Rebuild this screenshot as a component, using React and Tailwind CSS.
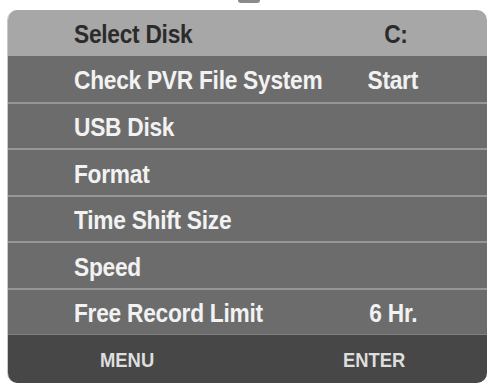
import React from 'react';

const rows = [
    { label: 'Check PVR File System', value: 'Start', h: 'h-[46px]' },
    { label: 'USB Disk', value: '', h: 'h-[46px]' },
    { label: 'Format', value: '', h: 'h-[47px]' },
    { label: 'Time Shift Size', value: '', h: 'h-[46px]' },
    { label: 'Speed', value: '', h: 'h-[47px]' },
    { label: 'Free Record Limit', value: '6 Hr.', h: 'h-[46px]' },
];

function Row({ label, value, h, first }) {
    return (
        <div
            className={`flex items-center ${h} ${first ? '' : 'border-t-2 border-[#979797]'} bg-[#6c6c6c] text-[#f2f2f2]`}
        >
            <div className="pl-[66px] pt-[3px] flex-1 min-w-0 whitespace-nowrap">
                <span className="inline-block origin-left scale-x-[0.91]">{label}</span>
            </div>
            <div className="w-[110px] shrink-0 pt-[3px] mr-[39px] text-center whitespace-nowrap">
                <span className="inline-block scale-x-[0.91]">{value}</span>
            </div>
        </div>
    );
}

export default function App() {
    return (
        <div
            className="w-[490px] h-[387px] bg-white overflow-hidden"
            style={{ fontFamily: '"Liberation Sans", Arial, sans-serif' }}
        >
            {/* bit of the stand above the panel */}
            <div className="ml-[238px] w-[22px] h-[3px] bg-[#8a8a8a] rounded-b-sm" />

            <div className="mt-[7px] ml-[7px] w-[480px] rounded-[10px] overflow-hidden border-l border-[#c8c8c8] font-bold text-[25px] tracking-[-0.3px] leading-none">
                {/* highlighted row */}
                <div className="flex items-center h-[46px] bg-[#a7a7a7] text-[#2b2b2b]">
                    <div className="pl-[66px] pt-[3px] flex-1 min-w-0 whitespace-nowrap">
                        <span className="inline-block origin-left scale-x-[0.91]">Select Disk</span>
                    </div>
                    <div className="w-[110px] shrink-0 pt-[3px] mr-[39px] text-center">
                        <span className="inline-block scale-x-[0.91] translate-x-[3px]">C:</span>
                    </div>
                </div>

                {rows.map((r, i) => (
                    <Row key={r.label} {...r} first={i === 0} />
                ))}

                {/* key hints */}
                <div className="flex items-center h-[49px] border-t border-[#808080] bg-[#474747] text-[#dedede] text-[20px] tracking-normal whitespace-nowrap">
                    <div className="w-[238px] shrink-0 pl-[92px] pt-[1px]">
                        <span className="inline-block origin-left scale-x-[0.92]">MENU</span>
                    </div>
                    <div className="flex-1 pl-[97px] pt-[1px]">
                        <span className="inline-block origin-left scale-x-[0.92]">ENTER</span>
                    </div>
                </div>
            </div>
        </div>
    );
}
